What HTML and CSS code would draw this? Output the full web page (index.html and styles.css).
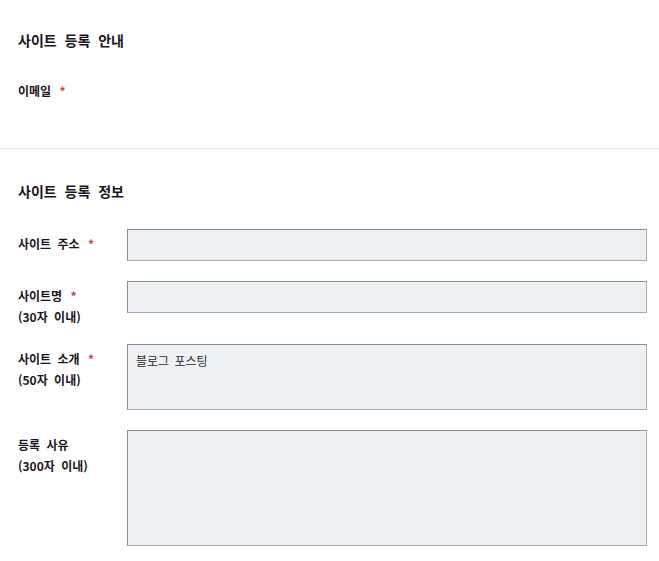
FILE: index.html
```html
<!DOCTYPE html>
<html lang="ko">
<head>
<meta charset="utf-8">
<title>사이트 등록</title>
<link rel="stylesheet" href="styles.css">
</head>
<body>
<section class="section section-guide">
  <h2 class="section-title">사이트 등록 안내</h2>
  <div class="field-label">이메일 <span class="req">*</span></div>
</section>
<section class="section section-info">
  <h2 class="section-title">사이트 등록 정보</h2>
  <div class="form">
    <div class="row">
      <label class="row-label">사이트 주소 <span class="req">*</span></label>
      <div class="box box-input"></div>
    </div>
    <div class="row">
      <label class="row-label">사이트명 <span class="req">*</span><br>(30자 이내)</label>
      <div class="box box-input"></div>
    </div>
    <div class="row">
      <label class="row-label">사이트 소개 <span class="req">*</span><br>(50자 이내)</label>
      <div class="box box-area-sm">블로그 포스팅</div>
    </div>
    <div class="row">
      <label class="row-label">등록 사유<br>(300자 이내)</label>
      <div class="box box-area-lg"></div>
    </div>
  </div>
</section>
</body>
</html>
```
FILE: styles.css
```css
html, body {
  margin: 0;
  padding: 0;
  background: #ffffff;
}
body {
  font-family: "Noto Sans CJK KR", "Noto Sans", sans-serif;
  color: #1c1320;
  width: 659px;
}
.section {
  padding: 0 12px 0 18px;
}
.section-guide {
  padding-top: 30px;
  padding-bottom: 47px;
  border-bottom: 1px solid #e6e6e6;
}
.section-info {
  padding-top: 32px;
}
.section-title {
  margin: 0;
  font-size: 14px;
  line-height: 20px;
  font-weight: 700;
  word-spacing: 4px;
}
.field-label {
  margin-top: 31px;
  font-size: 12px;
  line-height: 20px;
  font-weight: 700;
  word-spacing: 3px;
}
.req {
  color: #c8404f;
  font-weight: 700;
  margin-left: 2px;
}
.form {
  margin-top: 28px;
  display: flex;
  flex-direction: column;
  gap: 20px;
}
.row {
  display: grid;
  grid-template-columns: 109px 520px;
  align-items: start;
}
.row-label {
  padding-top: 4px;
  margin-bottom: -3px;
  font-size: 12px;
  line-height: 21px;
  font-weight: 700;
  word-spacing: 3px;
}
.box {
  box-sizing: border-box;
  background: #eef1f4;
  border: 1px solid;
  border-color: #8c8c8c #a8a8a8 #a8a8a8 #8c8c8c;
  font-size: 12px;
  line-height: 18px;
  color: #2a2a2a;
  padding: 7px 8px;
  word-spacing: 2px;
}
.box-input {
  height: 32px;
}
.box-area-sm {
  height: 66px;
}
.box-area-lg {
  height: 116px;
}
```
